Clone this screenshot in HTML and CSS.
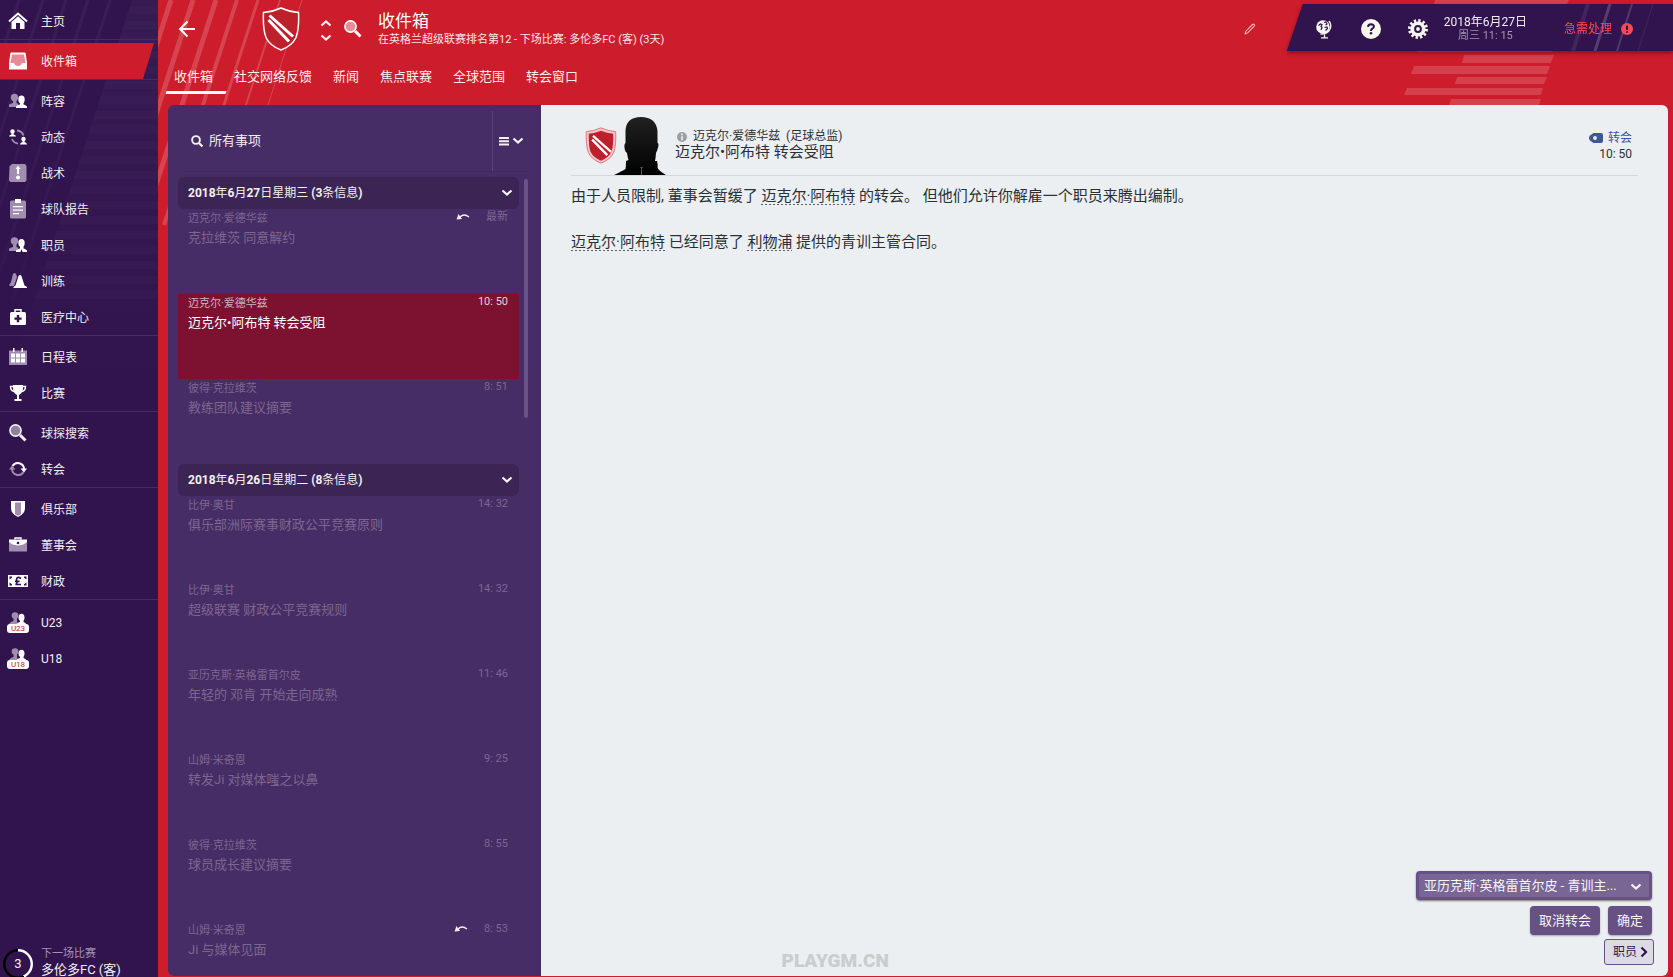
FILE: index.html
```html
<!DOCTYPE html>
<html lang="zh-CN">
<head>
<meta charset="utf-8">
<title>收件箱</title>
<link rel="stylesheet" href="styles.css">
</head>
<body>
<svg class="defs" aria-hidden="true">
  <symbol id="home" viewBox="0 0 20 20"><path d="M1 10.500 10 2.500l9 8" fill="none" stroke="#fff" stroke-width="2"/><path d="M3.500 11 10 5.200 16.500 11v7h-4.500v-6H8v6H3.500z" fill="#fff"/></symbol>
  <symbol id="inbox" viewBox="0 0 20 20"><path d="M3.500 1.500h13q1 0 1.200 1L19 12v6.500H1V12L2.300 2.500q.2-1 1.200-1z" fill="#fff"/><path d="M4 3.500h12l1.500 8.500h-3.500q-1 3-4 3t-4-3H2.500z" fill="#e58b93"/></symbol>
  <symbol id="people" viewBox="0 0 20 20"><g fill="#a08db0"><circle cx="6.500" cy="6.500" r="3.700"/><path d="M5 8h3.500v4l2 1-1.500 3H1v-2q0-1 4-2z"/></g><g fill="#fff"><ellipse cx="13.500" cy="8.500" rx="3.200" ry="4"/><path d="M12 11h3.500v2.500q3.500 1 3.500 2.500v1H8v-1q0-1.500 4-2.500z"/></g></symbol>
  <symbol id="dynamics" viewBox="0 0 20 20"><g fill="none" stroke="#a08db0" stroke-width="1.800"><path d="M9 3.500q5 .5 6.500 5"/><path d="M4 12q1.500 4 6 4.500"/></g><g fill="#fff"><circle cx="4.500" cy="4.500" r="2.200"/><path d="M3.500 6h2v1.500q2.500.5 2.500 2H1q0-1.500 2.500-2z"/><circle cx="15.500" cy="12" r="2.200"/><path d="M14.500 13h2v2q2.500.5 2.500 2.500h-7q0-2 2.500-2.500z"/></g></symbol>
  <symbol id="tactics" viewBox="0 0 20 20"><path d="M1.500 3.500 4 1h13l1.500 2v14.500L17 19H2.500L1 17.500z" fill="#a08db0"/><path d="M10 2.500 12.500 6H11v5H9V6H7.500z" fill="#fff"/><circle cx="10" cy="14.500" r="2" fill="#fff"/></symbol>
  <symbol id="report" viewBox="0 0 20 20"><rect x="2" y="1.500" width="16" height="18" rx="1.500" fill="#a08db0"/><path d="M7 0h6v4H7zM5 7h10v1.200H5zM5 10.500h10v1.200H5zM5 14h6v1.200H5z" fill="#fff"/></symbol>
  <symbol id="staff" viewBox="0 0 20 20"><g fill="#a08db0"><circle cx="6.500" cy="6" r="3.700"/><path d="M5 8h3.500v4l2 1-1.500 3H1v-2q0-1 4-2z"/></g><g fill="#fff"><ellipse cx="13.500" cy="8" rx="3.200" ry="4"/><path d="M12 11h3.500v2.500q3.500 1 3.500 2.500v1h-4.500L13.500 14 12.500 17H8v-1q0-1.500 4-2.500z"/></g></symbol>
  <symbol id="training" viewBox="0 0 20 20"><path d="M5 3q1.500-2 3 0l1 3-3 9H1.500V13q1.500-1 2-4z" fill="#a08db0"/><path d="M10.500 5q1.500-2 3 0l3 9.500 2.500 1.500v1H5.500v-1l2-1.500z" fill="#fff"/></symbol>
  <symbol id="medical" viewBox="0 0 20 20"><rect x="2" y="5" width="16" height="13" rx="1.500" fill="#fff"/><path d="M7 5V2.800h6V5" fill="none" stroke="#fff" stroke-width="1.500"/><path d="M8.800 8h2.400v2.400h2.400v2.400h-2.400v2.400H8.800v-2.400H6.400v-2.400h2.400z" fill="#31144e"/></symbol>
  <symbol id="calendar" viewBox="0 0 20 20"><path d="M1 3.500h18V18H1z" fill="#a08db0"/><path d="M5 1h1.500v4H5zM13.500 1H15v4h-1.500zM3 6.500h4v4H3zM8 6.500h4v4H8zM13 6.500h4v4h-4zM3 11.500h4v4H3zM8 11.500h4v4H8zM13 11.500h4v4h-4z" fill="#fff"/></symbol>
  <symbol id="cup" viewBox="0 0 20 20"><path d="M5 2h10v3q0 5-4 7v4h2.500v2h-7v-2H9v-4q-4-2-4-7z" fill="#fff"/><path d="M5.500 3.500H2.500q0 4 3.500 5M14.500 3.500h3q0 4-3.500 5" fill="none" stroke="#fff" stroke-width="1.400"/></symbol>
  <symbol id="glass" viewBox="0 0 20 20"><circle cx="7.500" cy="7.500" r="5.600" fill="currentColor" fill-opacity=".5" stroke="currentColor" stroke-width="1.600"/><path d="m12 12 5.500 5.500" stroke="currentColor" stroke-width="3"/></symbol>
  <symbol id="transfer" viewBox="0 0 20 20"><path d="M4.500 7A6.200 6.200 0 0 1 16 10" fill="none" stroke="#fff" stroke-width="2"/><path d="M12.500 9.500H19L16 13.500z" fill="#fff"/><path d="M15.500 13A6.200 6.200 0 0 1 4 10" fill="none" stroke="#a08db0" stroke-width="2"/><path d="M1 10.500h6.500L4 6.500z" fill="#a08db0"/></symbol>
  <symbol id="club" viewBox="0 0 20 20"><path d="M3 2h14v7q0 6-7 9-7-3-7-9z" fill="#fff"/><path d="M7 3.500h6V15q-1 1-3 1.800Q8 16 7 15z" fill="#a08db0"/></symbol>
  <symbol id="case" viewBox="0 0 20 20"><path d="M1 5h18v11.500H1z" fill="#a08db0"/><path d="M1 4.500h18v2.500q-3 3-9 3.500-6-.5-9-3.500z" fill="#fff"/><path d="M7 4.500V3h6v1.500" fill="none" stroke="#fff" stroke-width="1.400"/><circle cx="10" cy="8" r="1.300" fill="#31144e"/></symbol>
  <symbol id="money" viewBox="0 0 20 20"><path d="M0 4h20v12H0z" fill="#fff"/><path d="M1.500 5.500H4v1.200L1.500 8.500zM18.500 5.500H16v1.200l2.500 1.800zM1.500 14.500H4v-1.200L1.500 11.500zM18.500 14.500H16v-1.200l2.500-1.800z" fill="#31144e"/><path d="M13 7.500q-4-2.500-4.500 1l.5 3q0 1.500-1.500 2H13M7 10.300h4.500" fill="none" stroke="#31144e" stroke-width="1.700"/></symbol>
  <symbol id="squad" viewBox="0 0 20 20"><g fill="#a08db0"><circle cx="7" cy="3.500" r="3.300"/><path d="M5.500 5h3.500v4l1 4H1q0-2.500 4.500-4z"/></g><g fill="#fff"><ellipse cx="13.500" cy="5.500" rx="3" ry="3.800"/><path d="M12 8h3.500v2q3 1 3 3H8.500q0-2 3.500-3z"/></g></symbol>
  <symbol id="chev" viewBox="0 0 12 8"><path d="M1.500 1.500 6 5.500l4.500-4" fill="none" stroke="currentColor" stroke-width="2.200"/></symbol>
  <symbol id="crest" viewBox="0 0 38 44"><path d="M19 1q9 4 17.500 4.500.8 16-2.500 25Q30 39 19 43 8 39 4 30.500.7 21.500 1.500 5.500 10 5 19 1z" fill="#bd202b" stroke="#fff" stroke-width="1.500"/><path d="M7.500 8.500 31 29.500M6.500 13 27 34.500" stroke="#fff" stroke-width="3"/></symbol>
  <symbol id="reply" viewBox="0 0 14 8"><path d="M4 4q4-4 9 0" fill="none" stroke="#f4f1ec" stroke-width="1.300"/><path d="M2.500 1 6 6l-5.500.5z" fill="#f4f1ec"/></symbol>
</svg>

<div class="app">
  <nav class="sidebar" aria-label="主菜单">
    <svg class="sidebar-art" viewBox="0 0 158 400" aria-hidden="true">
      <defs>
        <pattern id="bars" width="158" height="15" patternUnits="userSpaceOnUse"><rect width="158" height="8" y="6" fill="#fff"/></pattern>
        <linearGradient id="fade" gradientUnits="userSpaceOnUse" x1="0" y1="0" x2="0" y2="400"><stop offset="0" stop-color="#fff" stop-opacity=".04"/><stop offset="1" stop-color="#fff" stop-opacity="0"/></linearGradient>
      </defs>
      <path d="M132 0h26v300H34z" fill="url(#bars)" opacity=".014"/>
      <path d="M132 0h26v400H2z" fill="url(#fade)" opacity=".7"/>
      <path d="M19 0-15 105M43 0-50 290M66 0-30 300M88 0-10 302M110 0 12 302" stroke="url(#fade)" stroke-width="3"/>
    </svg>
    <div class="nav-group"><a class="nav-item" href="#"><svg class="ico"><use href="#home"/></svg>主页</a></div>
    <div class="nav-group"><a class="nav-item current" href="#" aria-current="page"><svg class="ico"><use href="#inbox"/></svg>收件箱</a></div>
    <div class="nav-group">
      <a class="nav-item" href="#"><svg class="ico"><use href="#people"/></svg>阵容</a>
      <a class="nav-item" href="#"><svg class="ico"><use href="#dynamics"/></svg>动态</a>
      <a class="nav-item" href="#"><svg class="ico"><use href="#tactics"/></svg>战术</a>
      <a class="nav-item" href="#"><svg class="ico"><use href="#report"/></svg>球队报告</a>
      <a class="nav-item" href="#"><svg class="ico"><use href="#staff"/></svg>职员</a>
      <a class="nav-item" href="#"><svg class="ico"><use href="#training"/></svg>训练</a>
      <a class="nav-item" href="#"><svg class="ico"><use href="#medical"/></svg>医疗中心</a>
    </div>
    <div class="nav-group">
      <a class="nav-item" href="#"><svg class="ico"><use href="#calendar"/></svg>日程表</a>
      <a class="nav-item" href="#"><svg class="ico"><use href="#cup"/></svg>比赛</a>
    </div>
    <div class="nav-group">
      <a class="nav-item" href="#"><svg class="ico"><use href="#glass"/></svg>球探搜索</a>
      <a class="nav-item" href="#"><svg class="ico"><use href="#transfer"/></svg>转会</a>
    </div>
    <div class="nav-group">
      <a class="nav-item" href="#"><svg class="ico"><use href="#club"/></svg>俱乐部</a>
      <a class="nav-item" href="#"><svg class="ico"><use href="#case"/></svg>董事会</a>
      <a class="nav-item" href="#"><svg class="ico"><use href="#money"/></svg>财政</a>
    </div>
    <div class="nav-group last">
      <a class="nav-item" href="#"><span class="squad"><svg class="ico"><use href="#squad"/></svg><span class="squad-tag">U23</span></span>U23</a>
      <a class="nav-item" href="#"><span class="squad"><svg class="ico"><use href="#squad"/></svg><span class="squad-tag">U18</span></span>U18</a>
    </div>
    <a class="next-match" href="#">
      <span class="ring">3</span>
      <span class="next-text"><small>下一场比赛</small><span>多伦多FC (客)</span></span>
    </a>
  </nav>

  <div class="page">
    <svg class="art art-left" viewBox="0 0 160 225" aria-hidden="true">
      <g stroke="#fff" stroke-opacity=".18"><path d="M13 0-60 225M35 0-38 225M58 0-15 225" stroke-width="5"/><path d="M79 0 6 225" stroke-width="4"/><path d="M100 0 27 225" stroke-width="3"/><path d="M122 0 49 225" stroke-width="2"/><path d="M144 0 71 225"/></g>
    </svg>
    <svg class="art art-right" viewBox="0 0 270 105" aria-hidden="true">
      <path d="M32 0h134l-2 4H31zM15 49h135l-1 3H14zM61 55h90l-3 8H59zM11 66h136l-3 8H8zM54 77h90l-3 7H52zM4 88h136l-2 7H1zM48 99h90l-2 6H46z" fill="#fff" fill-opacity=".16"/>
    </svg>

    <header class="topbar">
      <button class="plain back" aria-label="返回"><svg width="18" height="18" viewBox="0 0 18 18"><path d="M17 9H2M9.500 1.500 2 9l7.500 7.500" fill="none" stroke="#fff" stroke-width="2"/></svg></button>
      <svg class="crest" viewBox="0 0 38 44"><use href="#crest"/></svg>
      <div class="steppers">
        <button class="plain" aria-label="上一个"><svg class="chev up"><use href="#chev"/></svg></button>
        <button class="plain" aria-label="下一个"><svg class="chev"><use href="#chev"/></svg></button>
      </div>
      <button class="plain find" aria-label="搜索"><svg width="20" height="20"><use href="#glass"/></svg></button>
      <div class="heading">
        <h1>收件箱</h1>
        <p>在英格兰超级联赛排名第12 - 下场比赛: 多伦多FC (客) (3天)</p>
      </div>
      <button class="plain edit" aria-label="编辑"><svg width="12" height="12" viewBox="0 0 12 12"><path d="m1.200 10.800.7-2.600L8.500 1.500q1-.8 1.700 0t0 1.700L3.700 9.900z" fill="none" stroke="#f3b9bd" stroke-width="1.100"/></svg></button>
      <div class="status-wrap">
        <div class="status">
          <svg class="status-art" viewBox="0 0 386 47" aria-hidden="true"><g stroke="#fff"><path d="m301 0-15 47" stroke-opacity=".08" stroke-width="4"/><path d="m323 0-15 47" stroke-opacity=".18" stroke-width="3"/><path d="m345 0-15 47" stroke-opacity=".16" stroke-width="2"/><path d="m366 0-15 47" stroke-opacity=".08"/></g></svg>
          <button class="plain" aria-label="世界"><svg width="20" height="20" viewBox="0 0 20 20"><circle cx="9" cy="8" r="6.800" fill="#f6f6ee"/><path d="M4.500 6.500 6.500 5l1.500.5-1 2 1 1-1 2.500M10 3.500l2-.5 1 2-1.500 1M10.500 8.500l2.500-.5.500 1.500-2 2" fill="none" stroke="#31144e" stroke-width="1.200"/><path d="M15 2q4 5-.5 10.500-3 3-8 2.500M10.500 15.500v3M7 18.800h7" fill="none" stroke="#f6f6ee" stroke-width="1.300"/></svg></button>
          <button class="plain" aria-label="帮助"><svg width="20" height="20" viewBox="0 0 20 20"><circle cx="10" cy="10" r="10" fill="#f6f6ee"/><path d="M7 7.800Q7.200 5.200 10 5.200q2.900.1 2.900 2.300 0 1.300-1.600 2.100-1.300.8-1.300 2.300" fill="none" stroke="#31144e" stroke-width="2"/><circle cx="10" cy="14.300" r="1.300" fill="#31144e"/></svg></button>
          <button class="plain" aria-label="设置"><svg width="20" height="20" viewBox="0 0 20 20"><circle cx="10" cy="10" r="8" fill="none" stroke="#f6f6ee" stroke-width="4" stroke-dasharray="2.200 1.989"/><circle cx="10" cy="10" r="7.600" fill="#f6f6ee"/><circle cx="10" cy="10" r="2.900" fill="#f6f6ee" stroke="#31144e" stroke-width="2"/></svg></button>
          <div class="clock"><span>2018年6月27日</span><small>周三 11: 15</small></div>
          <button class="plain urgent">急需处理 <svg width="12" height="12" viewBox="0 0 12 12"><circle cx="6" cy="6" r="6" fill="#fb4a51"/><path d="M6 2.500v4.500M6 8.200v1.600" stroke="#31144e" stroke-width="1.900"/></svg></button>
        </div>
      </div>
    </header>

    <nav class="tabs" aria-label="收件箱分类">
      <a class="tab active" href="#">收件箱</a><a class="tab" href="#">社交网络反馈</a><a class="tab" href="#">新闻</a><a class="tab" href="#">焦点联赛</a><a class="tab" href="#">全球范围</a><a class="tab" href="#">转会窗口</a>
    </nav>

    <main class="panel">
      <section class="list" aria-label="信息列表">
        <div class="filter">
          <label class="filter-box"><svg width="12" height="12" viewBox="0 0 12 12"><circle cx="5" cy="5" r="3.900" fill="none" stroke="#f4f1ec" stroke-width="1.900"/><path d="m8 8 3.500 3.500" stroke="#f4f1ec" stroke-width="2.200"/></svg><input type="text" value="所有事项" aria-label="筛选信息"></label>
          <button class="plain filter-menu" aria-label="列表选项"><svg width="10" height="10" viewBox="0 0 10 10"><path d="M0 2h10M0 5.300h10M0 8.600h10" stroke="#f4f1ec" stroke-width="2"/></svg><svg class="chev"><use href="#chev"/></svg></button>
        </div>
        <div class="scroll">
          <div class="rows">
            <button class="day"><span><b>2018</b>年<b>6</b>月<b>27</b>日星期三 <b>(3</b>条信息<b>)</b></span><svg class="chev"><use href="#chev"/></svg></button>
            <article class="mail"><span class="from">迈克尔·爱德华兹</span><span class="when"><svg class="reply"><use href="#reply"/></svg>最新</span><a href="#">克拉维茨 同意解约</a></article>
            <article class="mail selected"><span class="from">迈克尔·爱德华兹</span><span class="when">10: 50</span><a href="#">迈克尔•阿布特 转会受阻</a></article>
            <article class="mail"><span class="from">彼得·克拉维茨</span><span class="when">8: 51</span><a href="#">教练团队建议摘要</a></article>
            <button class="day"><span><b>2018</b>年<b>6</b>月<b>26</b>日星期二 <b>(8</b>条信息<b>)</b></span><svg class="chev"><use href="#chev"/></svg></button>
            <article class="mail"><span class="from">比伊·奥甘</span><span class="when">14: 32</span><a href="#">俱乐部洲际赛事财政公平竞赛原则</a></article>
            <article class="mail"><span class="from">比伊·奥甘</span><span class="when">14: 32</span><a href="#">超级联赛 财政公平竞赛规则</a></article>
            <article class="mail"><span class="from">亚历克斯·英格雷首尔皮</span><span class="when">11: 46</span><a href="#">年轻的 邓肯 开始走向成熟</a></article>
            <article class="mail"><span class="from">山姆·米奇恩</span><span class="when">9: 25</span><a href="#">转发Ji 对媒体嗤之以鼻</a></article>
            <article class="mail"><span class="from">彼得·克拉维茨</span><span class="when">8: 55</span><a href="#">球员成长建议摘要</a></article>
            <article class="mail"><span class="from">山姆·米奇恩</span><span class="when"><svg class="reply"><use href="#reply"/></svg>8: 53</span><a href="#">Ji 与媒体见面</a></article>
          </div>
          <div class="track"><div class="thumb"></div></div>
        </div>
      </section>

      <section class="message">
        <header class="msg-head">
          <svg class="msg-crest" viewBox="0 0 38 44"><path d="M19 1q9 4 17.500 4.500.8 16-2.500 25Q30 39 19 43 8 39 4 30.500.7 21.500 1.500 5.500 10 5 19 1z" fill="#f3c5c9" stroke="#dc6670"/><path d="M19 4.500q7 3 14.500 3.500.5 14-2 21.500Q28 36.500 19 40 10 36.500 6.500 29.500 4 22 4.500 8 12 7.500 19 4.500z" fill="#bf1f2b"/><path d="M9.500 10.500 31 29.500M8.500 15 26.500 33.500" stroke="#fff" stroke-width="2.800"/></svg>
          <svg class="portrait" viewBox="0 0 52 58"><defs><linearGradient id="dark" x1="0" y1="0" x2="0" y2="1"><stop stop-color="#212121"/><stop offset="1" stop-color="#000"/></linearGradient></defs><path d="M27 0Q42 0 43.500 14v12q1.500 0 .8 3.500T42 36q-.3 5-1 8h2q1 4 .6 7 1.400 3 8.400 7H0q8-4 11.500-6Q12 48 12 44l2.500-1Q13.500 40 13 36q-2-1-2.500-5t1-5V14Q12 0 27 0z" fill="url(#dark)"/><path d="M27.500 50v8M26.300 50.500h2.400" stroke="#555" stroke-width="1"/></svg>
          <div class="msg-title">
            <p><svg width="10" height="10" viewBox="0 0 10 10"><circle cx="5" cy="5" r="5" fill="#9b9fa1"/><path d="M5 1.600v1.700M5 4.200v4" stroke="#ebeff1" stroke-width="1.700"/></svg>迈克尔·爱德华兹&nbsp; (足球总监)</p>
            <h2>迈克尔•阿布特 转会受阻</h2>
          </div>
          <div class="msg-meta">
            <a href="#"><svg width="14" height="10" viewBox="0 0 14 10"><path d="M4.500 0H12q2 0 2 2v6q0 2-2 2H4.500L1 7.500Q-1 5 1 2.500z" fill="#3d5796"/><circle cx="6" cy="5" r="1.900" fill="#ebeff1"/></svg>转会</a>
            <span>10: 50</span>
          </div>
        </header>
        <div class="msg-body">
          <p>由于人员限制, 董事会暂缓了 <a href="#">迈克尔·阿布特</a> 的转会。 但他们允许你解雇一个职员来腾出编制。</p>
          <p><a href="#">迈克尔·阿布特</a> 已经同意了 <a href="#">利物浦</a> 提供的青训主管合同。</p>
        </div>
        <div class="actions">
          <div class="picker"><select aria-label="选择职员"><option>亚历克斯·英格雷首尔皮 - 青训主...</option></select><svg class="chev"><use href="#chev"/></svg></div>
          <div class="buttons"><button class="btn">取消转会</button><button class="btn">确定</button></div>
          <button class="btn-light">职员 <svg width="8" height="12" viewBox="0 0 8 12"><path d="m1.500 1.500 4.500 4.500-4.500 4.500" fill="none" stroke="#31144e" stroke-width="2.200"/></svg></button>
        </div>
        <div class="watermark">PLAYGM.CN</div>
      </section>
    </main>
  </div>
</div>
</body>
</html>
```
FILE: styles.css
```css
* { box-sizing: border-box; }
body {
  margin: 0;
  font-family: Roboto, "Noto Sans CJK SC", sans-serif;
  font-size: 12px;
  line-height: 16px;
  color: #f1eef2;
  background: #cd1c2b;
}
h1, h2, p { margin: 0; font-weight: 400; }
a { color: inherit; text-decoration: none; }
.defs { position: absolute; width: 0; height: 0; }
.plain { padding: 0; border: 0; background: none; color: inherit; font: inherit; display: inline-flex; align-items: center; cursor: pointer; }
svg { display: block; flex: none; }
.chev { width: 12px; height: 8px; color: #f6f4f0; }
.chev.up { transform: rotate(180deg); }

.app { display: grid; grid-template-columns: 158px minmax(0, 1fr); height: 100vh; overflow: hidden; }

/* Sidebar */
.sidebar { position: relative; display: flex; flex-direction: column; min-height: 0; overflow: hidden; background: #31144e; }
.sidebar-art { position: absolute; top: 0; left: 0; width: 158px; height: 400px; }
.nav-group { position: relative; padding-top: 3px; border-bottom: 1px solid #472c62; }
.nav-group.last { border-bottom: 0; padding-top: 4px; }
.nav-item { display: flex; align-items: center; gap: 13px; height: 36px; padding: 2px 0 0 8px; }
.nav-item > :first-child { margin-top: -2px; }
.nav-item .ico { width: 20px; height: 20px; }
.nav-item.current { background: #cd1c2b; width: 154px; clip-path: polygon(0 0, 100% 0, 143px 100%, 0 100%); }
.squad { position: relative; width: 20px; height: 20px; }
.squad-tag { position: absolute; left: -1px; bottom: -1px; width: 22px; height: 9px; border-radius: 3px; background: #fff; color: #c32033; font-size: 8px; line-height: 9px; text-align: center; }
.next-match { position: relative; display: flex; gap: 8px; margin-top: auto; padding-left: 3px; height: 32px; }
.ring { flex: none; display: grid; place-items: center; width: 30px; height: 30px; margin-top: 4px; border-radius: 50%; font-size: 13px;
  background: radial-gradient(circle, #31144e 0 12px, transparent 13px), conic-gradient(#fff 0 155deg, #000 155deg); }
.next-text { display: flex; flex-direction: column; padding-top: 1px; font-size: 13px; }
.next-text small { font-size: 11px; color: #a493b0; }

/* Page */
.page { position: relative; display: flex; flex-direction: column; min-width: 0; min-height: 0; padding: 0 5px 1px 10px; }
.art { position: absolute; top: 0; }
.art-left { left: 0; width: 160px; height: 225px; }
.art-right { right: 0; width: 270px; height: 105px; }

.topbar { position: relative; display: flex; align-items: flex-start; height: 58px; margin-right: -5px; }
.back { margin: 20px 0 0 10px; }
.crest { width: 38px; height: 44px; margin: 7px 0 0 66px; }
.steppers { display: flex; flex-direction: column; gap: 7px; margin: 19px 0 0 20px; }
.find { margin: 19px 0 0 11px; color: #fff; }
.heading { margin: 11px 0 0 15px; }
.heading h1 { font-size: 17px; line-height: 21px; color: #fff; }
.heading p { font-size: 11px; color: #fae4e5; }
.edit { margin: 23px 31px 0 auto; }
.status-wrap { margin-top: 4px; filter: drop-shadow(0 2px 2px rgba(60, 0, 20, .5)); }
.status { position: relative; display: flex; align-items: center; gap: 27px; height: 47px; padding: 2px 40px 0 27px; background: #31144e; clip-path: polygon(16px 0, 100% 0, 100% 100%, 0 100%); }
.status-art { position: absolute; top: 0; right: 0; width: 386px; height: 47px; }
.status .plain, .clock { position: relative; }
.clock { display: flex; flex-direction: column; align-items: center; margin-left: -11px; line-height: 14px; white-space: nowrap; }
.clock small { font-size: 11px; color: #a493b0; }
.status .urgent { gap: 9px; margin-left: 10px; color: #fb4a51; white-space: nowrap; }

.tabs { position: relative; display: flex; height: 47px; margin-left: -2px; }
.tab { height: 36px; padding: 0 10px; margin-right: 1px; line-height: 38px; font-size: 13px; color: #fbeeee; }
.tab.active { position: relative; padding-left: 8px; }
.tab.active::after { content: ""; position: absolute; left: 0; right: -3px; bottom: 0; height: 3px; background: #fff; transform: skewX(-18deg); }

.panel { position: relative; flex: 1; min-height: 0; display: grid; grid-template-columns: 373px minmax(0, 1fr); border-radius: 6px; overflow: hidden; }

/* Message list */
.list { display: flex; flex-direction: column; min-height: 0; background: #472d66; }
.filter { display: flex; height: 67px; margin: 0 12px 5px 13px; border-bottom: 1px solid #422961; }
.filter-box { flex: 1; display: flex; align-items: center; gap: 6px; padding: 5px 0 0 10px; }
.filter-box input { flex: 1; min-width: 0; padding: 0; border: 0; background: none; color: #f1eef2; font: inherit; font-size: 13px; }
.filter-menu { gap: 3px; margin-top: 6px; padding: 0 5px 0 6px; border-left: 1px solid #5b4378; }
.scroll { flex: 1; min-height: 0; display: flex; gap: 5px; padding-left: 10px; overflow: hidden; }
.rows { width: 341px; }
.day { display: flex; justify-content: space-between; align-items: center; width: 100%; height: 32px; padding: 0 6px 0 10px; border: 0; border-radius: 6px; background: #3c2555; color: #f4f1ec; font: inherit; text-align: left; }
.mail { display: grid; grid-template-columns: 1fr auto; align-content: start; height: 85px; padding: 0 11px 0 10px; color: #7c668f; }
.from, .when { font-size: 11px; line-height: 17px; }
.from { padding-top: 1px; }
.when { display: flex; gap: 16px; line-height: 15px; }
.when .reply { width: 14px; height: 8px; margin-top: 4px; }
.mail a { grid-column: 1 / -1; font-size: 13px; line-height: 22px; }
.mail.selected { background: #7d1230; color: #cbb3c0; }
.mail.selected a { color: #fff; }
.mail.selected .when { color: #e3cfd7; }
.track { padding-top: 2px; }
.thumb { width: 4px; height: 239px; border-radius: 2px; background: #6b5288; }

/* Open message */
.message { position: relative; display: flex; flex-direction: column; min-width: 0; min-height: 0; padding: 0 30px; background: #ebeff2; color: #2a3035; }
.msg-head { display: flex; height: 71px; border-bottom: 1px solid #d3d8db; padding-left: 14px; }
.msg-crest { width: 32px; height: 37px; margin-top: 22px; }
.portrait { width: 52px; height: 58px; margin: 12px 0 0 -3px; }
.msg-title { padding: 24px 0 0 9px; }
.msg-title p { display: flex; align-items: center; gap: 6px; padding-left: 2px; line-height: 15px; white-space: nowrap; }
.msg-title h2 { font-size: 15px; line-height: 17px; }
.msg-meta { margin-left: auto; padding: 25px 6px 0 0; display: flex; flex-direction: column; align-items: flex-end; }
.msg-meta a { display: flex; align-items: center; gap: 5px; color: #3d5796; }
.msg-body { padding-top: 9px; font-size: 15px; line-height: 23px; }
.msg-body p { margin-bottom: 23px; }
.msg-body a { background: repeating-linear-gradient(90deg, #5c6266 0 2px, transparent 2px 4px) left bottom / 100% 1px no-repeat; }
.actions { margin: auto -16px 11px 0; display: flex; flex-direction: column; align-items: flex-end; }
.picker { position: relative; width: 236px; margin-right: 2px; }
.picker select { display: block; appearance: none; width: 100%; height: 29px; padding: 0 30px 0 5px; border: 3px solid #66508a; border-radius: 4px; background: #7a6695; color: #f7f5f8; font: inherit; font-size: 13px; box-shadow: 0 1px 2px rgba(0, 0, 0, .5); }
.picker .chev { position: absolute; right: 10px; top: 12px; pointer-events: none; }
.buttons { display: flex; gap: 8px; margin: 6px 2px 4px 0; }
.btn { height: 29px; padding: 0 9px; border: 0; border-radius: 4px; background: #665084; color: #f7f5f8; font: inherit; font-size: 13px; box-shadow: 0 1px 2px rgba(0, 0, 0, .3); }
.btn-light { display: flex; align-items: center; gap: 3px; height: 26px; padding: 0 5px 0 8px; border: 1px solid #665084; border-radius: 3px; background: #dcdbe3; color: #31144e; font: inherit; }
.watermark { position: absolute; left: 50%; bottom: 0; margin-left: -323px; font-weight: 900; font-size: 19px; line-height: 30px; color: #cacccd; }
```
